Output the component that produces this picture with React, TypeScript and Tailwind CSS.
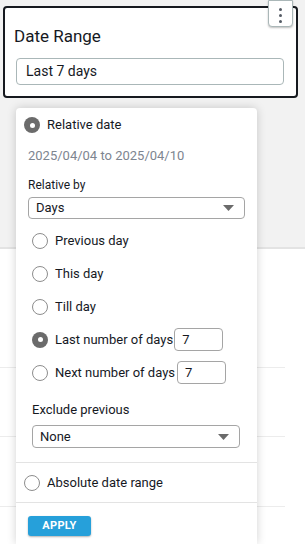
import React from "react";

const font = { fontFamily: 'Roboto, "Noto Sans", Arial, sans-serif' };

function Radio({ checked }: { checked?: boolean }) {
  if (checked) {
    return (
      <span className="flex h-4 w-4 shrink-0 items-center justify-center rounded-full bg-[#6b6b6b]">
        <span className="h-[5px] w-[5px] rounded-full bg-white" />
      </span>
    );
  }
  return <span className="h-4 w-4 shrink-0 rounded-full border border-[#8d8d8d] bg-white" />;
}

function Caret() {
  return (
    <svg width="11" height="6" viewBox="0 0 11 6" className="shrink-0">
      <path d="M0 0 L11 0 L5.5 6 Z" fill="#6b6b6b" />
    </svg>
  );
}

function Select({ value, className }: { value: string; className: string }) {
  return (
    <div
      className={`flex items-center justify-between rounded-[4px] border border-[#a5a5a5] bg-white pl-[7px] pr-[10px] text-[13px] text-[#16191f] ${className}`}
    >
      <span>{value}</span>
      <Caret />
    </div>
  );
}

const options = [
  { label: "Previous day" },
  { label: "This day" },
  { label: "Till day" },
  { label: "Last number of days", checked: true, input: "ml-[1px] w-[49px]" },
  { label: "Next number of days", input: "ml-[2px] w-[49px]" },
];

export default function App() {
  return (
    <div className="relative h-[544px] w-[305px] overflow-hidden bg-[#f2f2f2]" style={font}>
      {/* dashboard card */}
      <div className="pl-[3px] pr-[7px] pt-[6px]">
        <div className="relative h-[92px] rounded-[4px] border-2 border-[#16191f] bg-white">
          <div className="absolute right-[3px] top-[-8px] flex h-[27px] w-[25px] flex-col items-center justify-end gap-[3px] rounded-b-[4px] border border-[#aab7b8] bg-white pb-[3px] shadow-[0_1px_2px_rgba(0,0,0,0.25)]">
            <span className="h-[3px] w-[3px] rounded-full bg-[#545b64]" />
            <span className="h-[3px] w-[3px] rounded-full bg-[#545b64]" />
            <span className="h-[3px] w-[3px] rounded-full bg-[#545b64]" />
          </div>
          <div className="pl-[9px] pt-[17px] text-[17px] leading-[22px] text-[#16191f]">Date Range</div>
          <div className="ml-[11px] mr-[12px] mt-[11px] flex h-[27px] items-center rounded-[4px] border border-[#aab7b8] px-[9px] text-[14px] text-[#16191f]">
            Last 7 days
          </div>
        </div>
      </div>

      {/* background rows */}
      <div className="absolute left-0 right-0 top-[247px] bottom-0 border-t-2 border-[#e3e3e3] bg-white">
        <div className="h-[119px] w-[285px] border-b border-[#ececec]" />
        <div className="h-[69px] w-[285px] border-b border-[#ececec]" />
        <div className="h-[70px] w-[285px] border-b border-[#ececec]" />
      </div>

      {/* popover */}
      <div className="absolute left-[16px] top-[108px] bottom-0 w-[241px] rounded-t-[4px] bg-white shadow-[0_0_10px_rgba(0,0,0,0.18)]">
        <div className="flex items-center gap-[7px] pl-[8px] pt-[9px] text-[13px] leading-[16px] text-[#16191f]">
          <Radio checked />
          <span>Relative date</span>
        </div>
        <div className="mt-[14px] pl-[12px] text-[13px] leading-[18px] text-[#7d8590]">2025/04/04 to 2025/04/10</div>
        <div className="mt-[12px] pl-[12px] text-[12px] leading-[16px] text-[#16191f]">Relative by</div>
        <div className="mt-[4px] pl-[12px]">
          <Select value="Days" className="h-[22px] w-[217px]" />
        </div>

        <div className="mt-[5px] pl-[16px]">
          {options.map((o) => (
            <div key={o.label} className="flex h-[33px] items-center text-[13px] text-[#16191f]">
              <Radio checked={o.checked} />
              <span className="ml-[7px]">{o.label}</span>
              {o.input && (
                <div className={`flex h-[23px] items-center rounded-[4px] border border-[#a5a5a5] pl-[7px] text-[13px] ${o.input}`}>
                  7
                </div>
              )}
            </div>
          ))}
        </div>

        <div className="mt-[12px] pl-[16px] text-[13px] leading-[18px] text-[#16191f]">Exclude previous</div>
        <div className="mt-[6px] pl-[16px]">
          <Select value="None" className="h-[23px] w-[208px]" />
        </div>

        <div className="mt-[14px] border-t border-[#e3e3e3]" />
        <div className="flex h-[39px] items-center gap-[7px] pl-[8px] text-[13px] text-[#16191f]">
          <Radio />
          <span>Absolute date range</span>
        </div>
        <div className="border-t border-[#e3e3e3]" />
        <div className="pl-[12px] pt-[13px]">
          <div className="flex h-[20px] w-[63px] items-center justify-center rounded-[3px] bg-[#26a0da] text-[11px] font-bold tracking-[0.3px] text-white shadow-[0_1px_2px_rgba(0,0,0,0.3)]">
            APPLY
          </div>
        </div>
      </div>
    </div>
  );
}
